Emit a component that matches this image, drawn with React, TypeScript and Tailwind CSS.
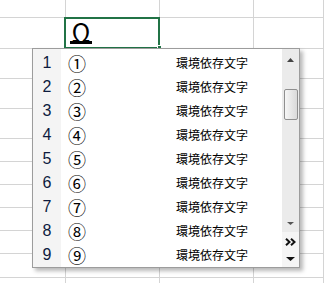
import React from 'react'

const colWidths = [66, 94, 94, 70]
const rowHeights = [18, 31, 30, 30, 30, 23, 23, 23, 23, 23, 24, 6]
const circled = ['①', '②', '③', '④', '⑤', '⑥', '⑦', '⑧', '⑨']

function Sheet() {
  return (
    <div className="grid grid-cols-[66px_94px_94px_70px] grid-rows-[18px_31px_30px_30px_30px_23px_23px_23px_23px_23px_24px_6px] bg-white">
      {rowHeights.map((_, r) =>
        colWidths.map((_, c) => (
          <div key={`${r}-${c}`} className="border-r border-b border-[#d4d4d4]">
            {r === 1 && c === 1 && (
              <div className="pl-[4px] pt-[4px] leading-none">
                <span className="inline-block w-[22px] border-b-[3px] border-black text-center text-[25px] leading-[19px] text-black" style={{ fontFamily: '"Noto Sans CJK JP", sans-serif' }}>
                  Ω
                </span>
              </div>
            )}
          </div>
        ))
      )}
    </div>
  )
}

function Scrollbar() {
  return (
    <div className="flex w-[17px] flex-col">
      <div className="flex h-[183px] flex-col items-center bg-[#ebebeb]">
        <svg className="mt-[9px]" width="7" height="4" viewBox="0 0 7 4">
          <path d="M0 4 L3.5 0 L7 4 Z" fill="#444" />
        </svg>
        <div className="mt-[27px] h-[31px] w-[14px] rounded-[2px] border border-[#8f8f8f] bg-gradient-to-r from-[#f6f6f6] to-[#d9d9d9]" />
        <svg className="mt-auto mb-[7px]" width="7" height="3" viewBox="0 0 7 3">
          <path d="M0 0 L7 0 L3.5 3 Z" fill="#555" />
        </svg>
      </div>
      <div className="flex flex-1 flex-col items-center bg-[#f5f5f5]">
        <svg className="mt-[6px]" width="11" height="8" viewBox="0 0 11 8">
          <path d="M1 0.8 L4.5 4 L1 7.2 M6 0.8 L9.5 4 L6 7.2" fill="none" stroke="#111" strokeWidth="2" />
        </svg>
        <svg className="mt-[11px]" width="9" height="4" viewBox="0 0 9 4">
          <path d="M0 0 L9 0 L4.5 4 Z" fill="#111" />
        </svg>
      </div>
    </div>
  )
}

function Popup() {
  return (
    <div className="absolute left-[32px] top-[48px] flex h-[220px] w-[268px] border border-[#9c9c9c] bg-white shadow-[3px_3px_4px_rgba(0,0,0,0.28)]">
      <div className="flex w-[28px] flex-col bg-[#f4f4f4] pt-[2px]">
        {circled.map((_, i) => (
          <div key={i} className="flex h-[24px] items-center justify-center text-[16px] text-[#0d1b3e]" style={{ fontFamily: '"Liberation Sans", sans-serif' }}>
            {i + 1}
          </div>
        ))}
      </div>
      <div className="flex w-[221px] flex-col pt-[2px]">
        {circled.map((ch, i) => (
          <div key={i} className="flex h-[24px] items-center pl-[7px]">
            <span className="w-[108px] text-[18px] leading-none text-black" style={{ fontFamily: '"Noto Sans CJK JP", sans-serif' }}>
              {ch}
            </span>
            <span className="text-[12px] text-black" style={{ fontFamily: '"Noto Sans CJK JP", sans-serif' }}>
              環境依存文字
            </span>
          </div>
        ))}
      </div>
      <Scrollbar />
    </div>
  )
}

export default function App() {
  return (
    <div className="relative h-[283px] w-[324px] overflow-hidden bg-white">
      <Sheet />
      <div className="absolute left-[64px] top-[17px] h-[32px] w-[96px] border-2 border-[#217346]" />
      <div className="absolute left-[157px] top-[45px] h-[5px] w-[5px] border border-white bg-[#217346]" />
      <Popup />
    </div>
  )
}
